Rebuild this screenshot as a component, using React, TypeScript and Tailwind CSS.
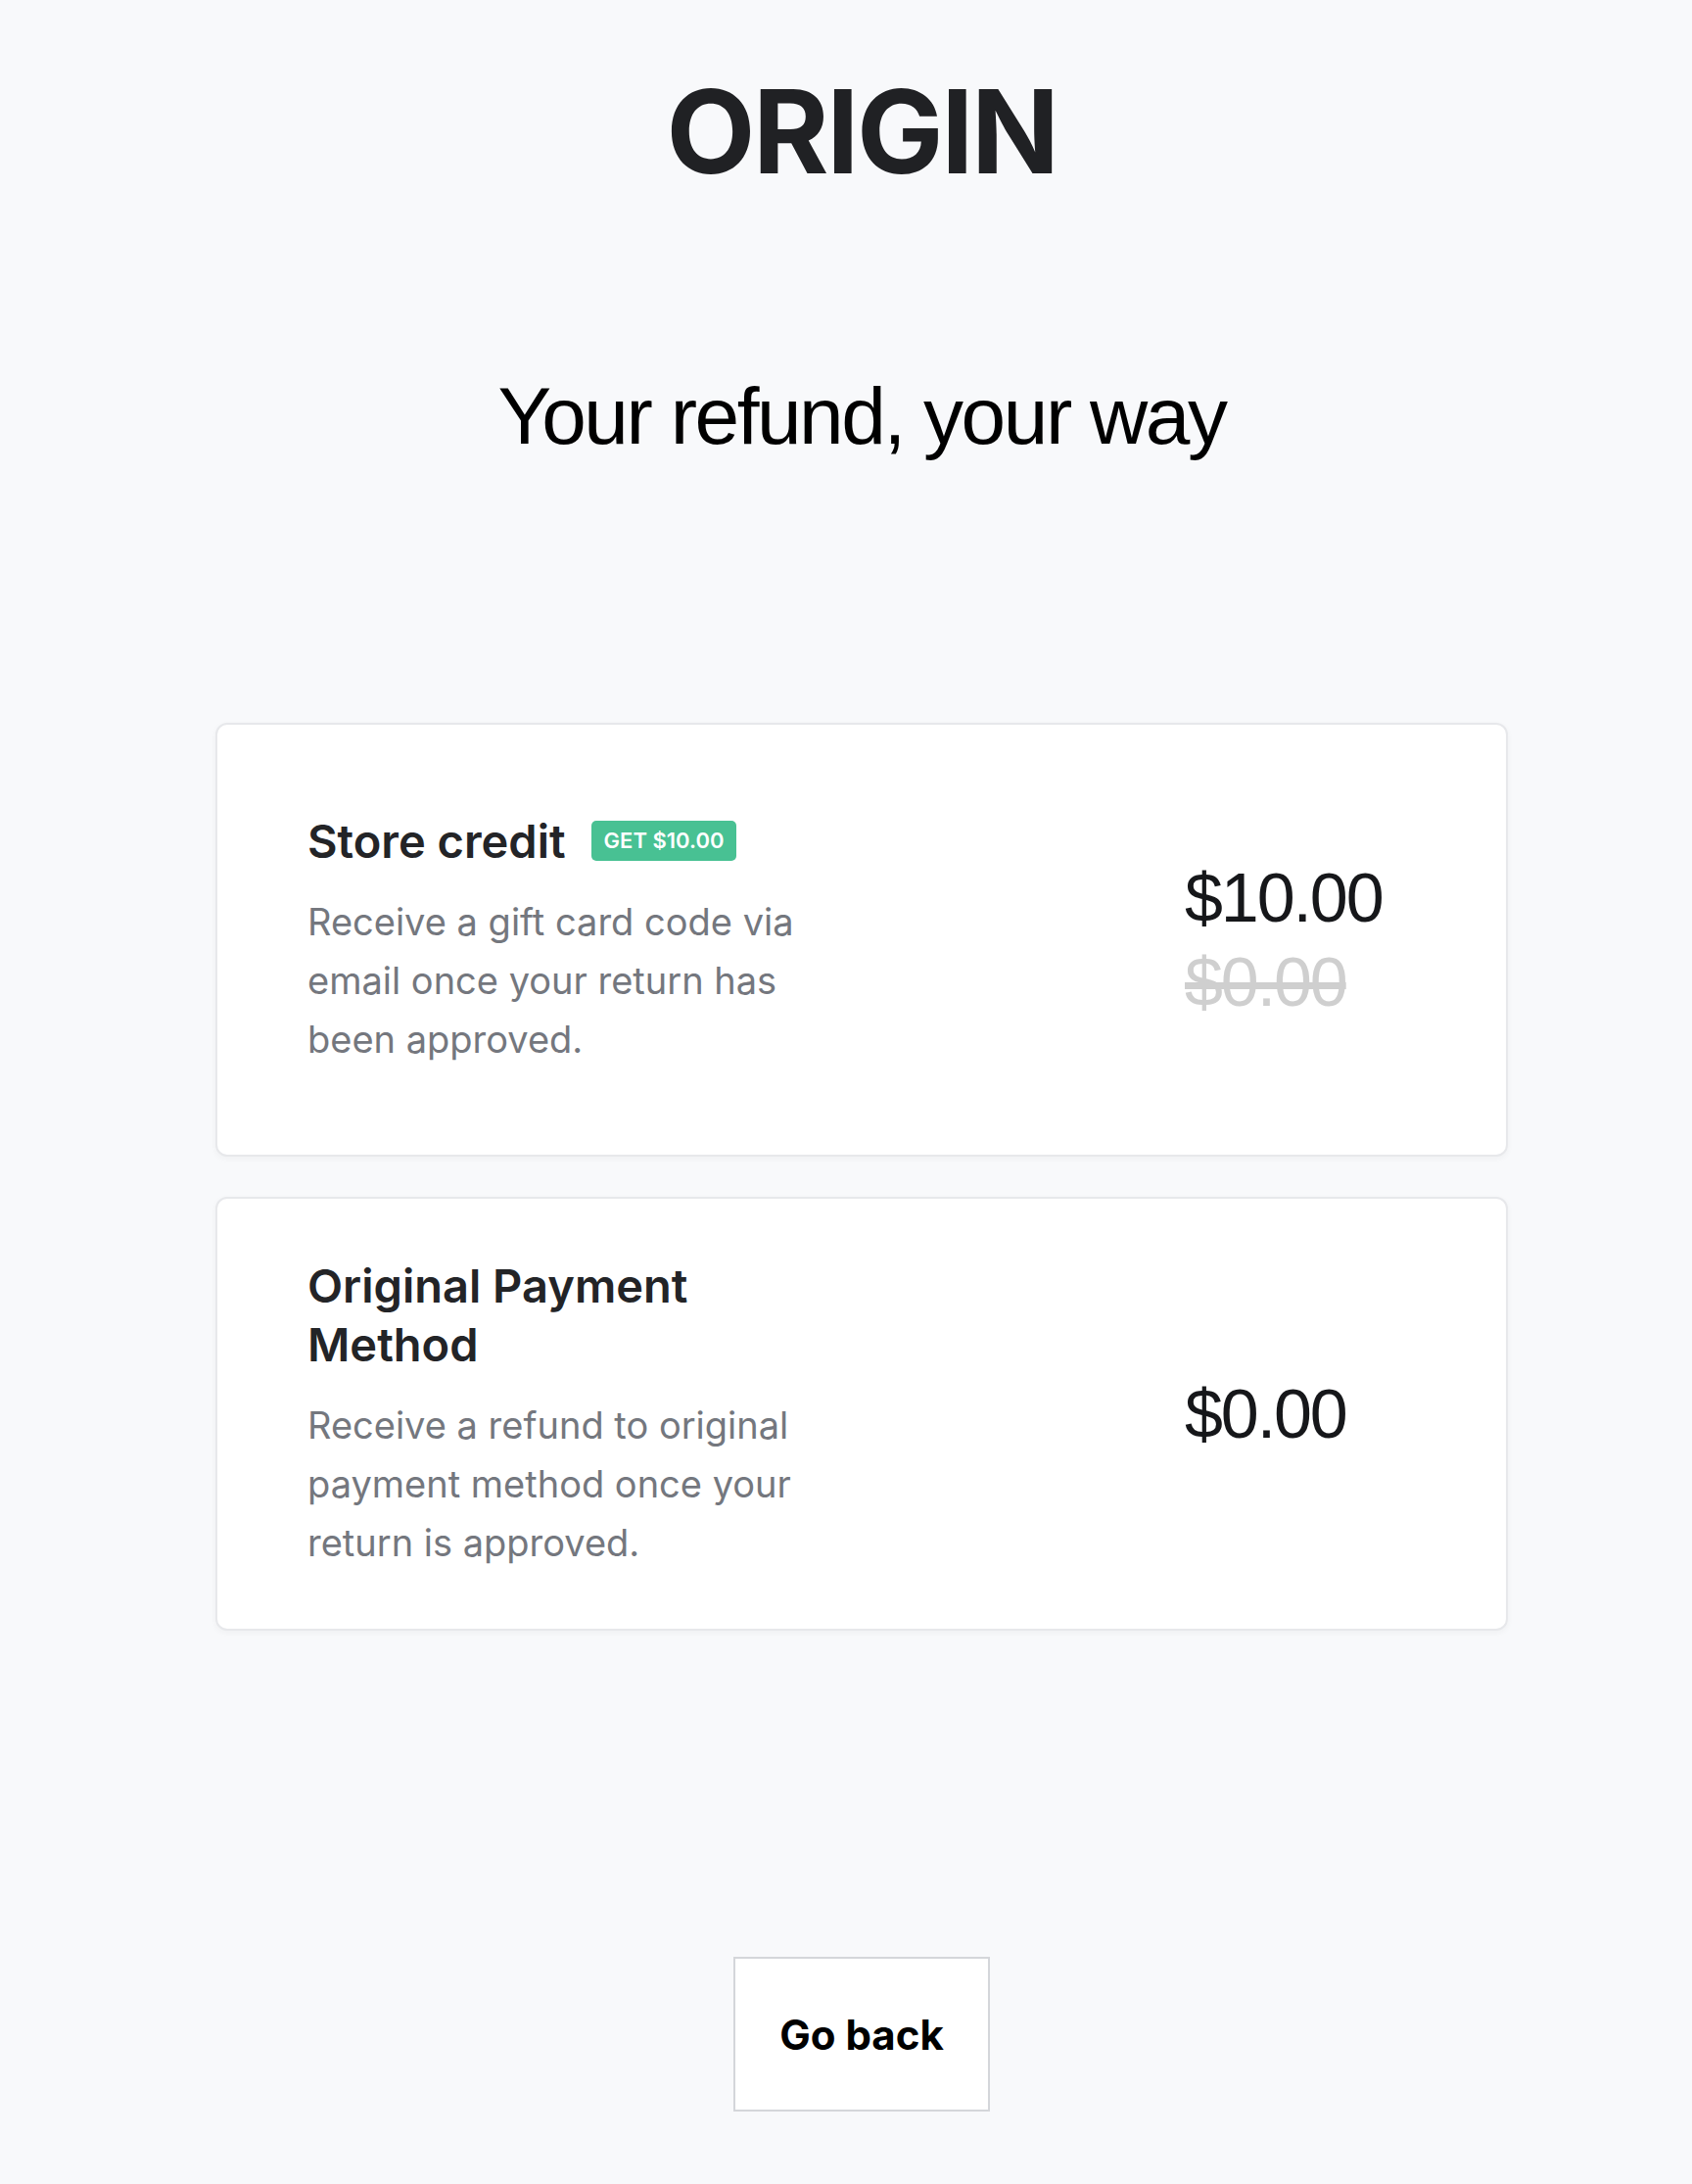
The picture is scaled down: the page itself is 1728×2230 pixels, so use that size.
import React from 'react';

interface RefundOptionProps {
  title: string;
  badge?: string;
  description: string;
  price: string;
  oldPrice?: string;
}

const RefundOption: React.FC<RefundOptionProps> = ({ title, badge, description, price, oldPrice }) => {
  return (
    <div className="flex h-[443px] w-full items-center rounded-[12px] border-2 border-[#e7e8eb] bg-white px-[92px] shadow-[0_2px_6px_rgba(0,0,0,0.04)]">
      {/* Left: title + copy */}
      <div className="flex-1">
        <div className="w-[520px]">
          <div className="flex items-center gap-[26px]">
            <h2 className="font-['Inter'] text-[47px] font-semibold leading-[60px] text-[#232427]">{title}</h2>
            {badge && (
              <span className="flex h-[41px] items-center rounded-[5px] bg-[#48c193] px-[13px] font-['Inter'] text-[22px] font-semibold text-white">
                {badge}
              </span>
            )}
          </div>
          <p className="mt-[22px] font-['Inter'] text-[38px] leading-[60px] text-[#74777e]">{description}</p>
        </div>
      </div>

      {/* Right: amount */}
      <div className="w-[236px] font-['Liberation_Sans',Arial,sans-serif] text-[70px] leading-[86px] tracking-[-0.03em]">
        <div className="text-[#16171a]">{price}</div>
        {oldPrice && <div className="text-[#cfcfcf] line-through decoration-[#cfcfcf]">{oldPrice}</div>}
      </div>
    </div>
  );
};

export default function App() {
  return (
    <div className="min-h-screen bg-[#f8f9fb] pb-[76px] pl-8">
      <header className="pt-[75px] text-center">
        <div className="font-['Inter'] text-[118px] font-bold leading-none tracking-[-0.02em] text-[#202124]">ORIGIN</div>
      </header>

      <h1 className="mt-[191px] text-center font-['Liberation_Sans',Arial,sans-serif] text-[82px] leading-none tracking-[-0.03em] text-black">
        Your refund, your way
      </h1>

      <section className="mx-auto mt-[272px] flex w-[1320px] flex-col gap-[41px]">
        <RefundOption
          title="Store credit"
          badge="GET $10.00"
          description="Receive a gift card code via email once your return has been approved."
          price="$10.00"
          oldPrice="$0.00"
        />
        <RefundOption
          title="Original Payment Method"
          description="Receive a refund to original payment method once your return is approved."
          price="$0.00"
        />
      </section>

      <div className="mt-[333px] flex justify-center">
        <button className="h-[158px] w-[262px] border-2 border-[#d4d6da] bg-white font-['Inter'] text-[42px] font-bold text-black">
          Go back
        </button>
      </div>
    </div>
  );
}
